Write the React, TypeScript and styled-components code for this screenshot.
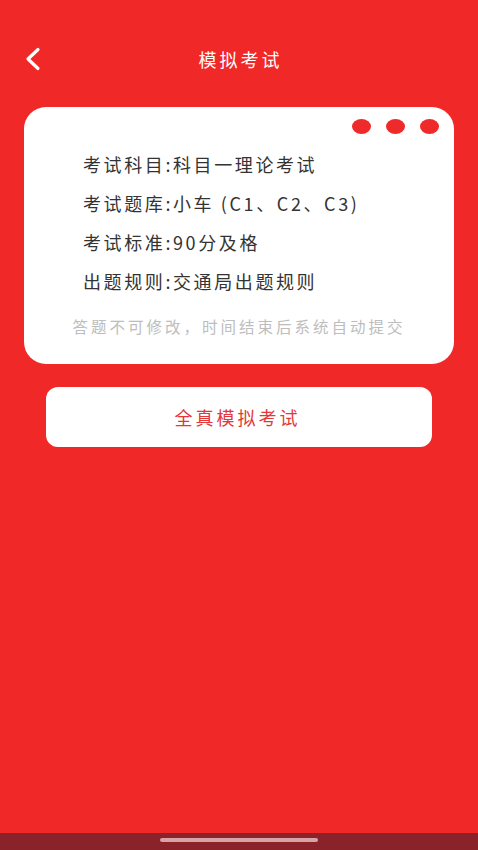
import styled, { createGlobalStyle } from 'styled-components'

const GlobalStyle = createGlobalStyle`
  html, body {
    margin: 0;
    padding: 0;
  }
  body {
    font-family: "Noto Sans CJK SC", "Noto Sans", sans-serif;
    background: #f02828;
  }
`

const rules = [
  '考试科目:科目一理论考试',
  '考试题库:小车 (C1、C2、C3)',
  '考试标准:90分及格',
  '出题规则:交通局出题规则',
]

const App = () => {
  return (
    <>
      <GlobalStyle />
      <Page>
        <Header>
          <BackButton aria-label="返回">
            <svg width="18" height="24" viewBox="0 0 18 24" fill="none">
              <path d="M14 2.5 L4 12 L14 21.5" stroke="#fff" strokeWidth="3.2" strokeLinecap="round" strokeLinejoin="round" />
            </svg>
          </BackButton>
          <Title>模拟考试</Title>
        </Header>
        <Card>
          <Dots>
            <Dot />
            <Dot />
            <Dot />
          </Dots>
          <RuleList>
            {rules.map((r) => (
              <RuleItem key={r}>{r}</RuleItem>
            ))}
          </RuleList>
          <Hint>答题不可修改，时间结束后系统自动提交</Hint>
        </Card>
        <StartButton>全真模拟考试</StartButton>
        <NavBar>
          <HomeIndicator />
        </NavBar>
      </Page>
    </>
  )
}

export default App

const Page = styled.div`
  display: flex;
  flex-direction: column;
  min-height: 100vh;
  background: #f02828;
`

const Header = styled.header`
  position: relative;
  height: 38px;
  margin-top: 40px;
  display: flex;
  align-items: center;
  justify-content: center;
`

const BackButton = styled.button`
  position: absolute;
  left: 24px;
  top: 7px;
  padding: 0;
  border: none;
  background: transparent;
  display: flex;
`

const Title = styled.h1`
  margin: 0;
  color: #fff;
  font-size: 18px;
  font-weight: 400;
  letter-spacing: 3px;
  margin-right: -3px;
`

const Card = styled.section`
  margin: 29px 24px 0;
  background: #fff;
  border-radius: 22px;
  padding: 12px 15px 28px 59px;
  display: flex;
  flex-direction: column;
`

const Dots = styled.div`
  display: flex;
  justify-content: flex-end;
  gap: 15px;
`

const Dot = styled.span`
  width: 19px;
  height: 15px;
  border-radius: 50%;
  background: #ee2a2a;
`

const RuleList = styled.ul`
  list-style: none;
  margin: 11px 0 0;
  padding: 0;
`

const RuleItem = styled.li`
  height: 39px;
  line-height: 39px;
  font-size: 18px;
  letter-spacing: 2.6px;
  color: #333;
`

const Hint = styled.p`
  margin: 15px 0 0 -44px;
  line-height: 20px;
  font-size: 15.5px;
  letter-spacing: 3px;
  color: #bdbdbd;
  text-align: center;
`

const StartButton = styled.button`
  margin: 23px 46px 0;
  height: 60px;
  border: none;
  border-radius: 12px;
  background: #fff;
  color: #e23838;
  font-family: inherit;
  font-size: 18px;
  letter-spacing: 3px;
  padding-left: 3px;
`

const NavBar = styled.div`
  margin-top: auto;
  height: 17px;
  background: #8a2329;
  display: flex;
  justify-content: center;
  padding-top: 5px;
  box-sizing: border-box;
`

const HomeIndicator = styled.div`
  width: 158px;
  height: 4px;
  border-radius: 2px;
  background: #dba2a5;
`
